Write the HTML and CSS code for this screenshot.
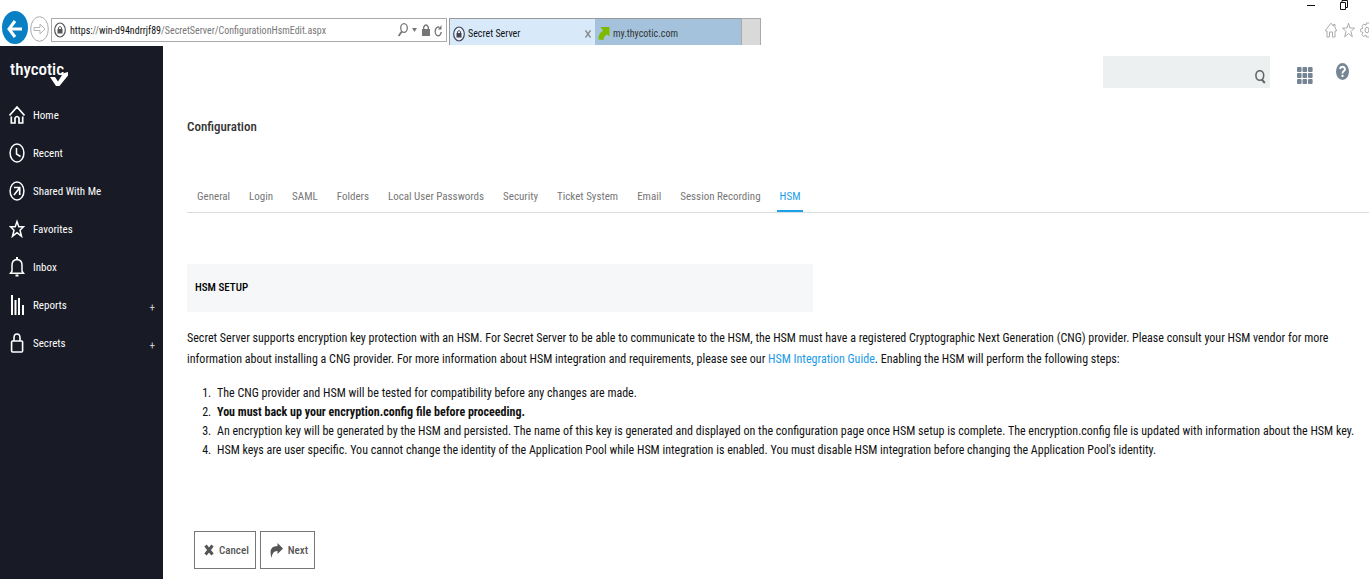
FILE: index.html
```html
<!DOCTYPE html>
<html lang="en">
<head>
<meta charset="utf-8">
<title>Secret Server</title>
<link rel="stylesheet" href="styles.css">
</head>
<body>
<header class="browser">
  <button class="nav-btn" aria-label="Back"><svg width="26" height="33" viewBox="0 0 26 33"><ellipse cx="13" cy="16.500" rx="13" ry="16.500" fill="#0a80c4"/><path d="M20 18H7M13 10L7 18l6 8" fill="none" stroke="#fff" stroke-width="3"/></svg></button>
  <button class="nav-btn fwd" aria-label="Forward"><svg width="19" height="26" viewBox="0 0 19 26"><ellipse cx="9.500" cy="13" rx="8.800" ry="12.300" fill="#fff" stroke="#aaa"/><path d="M4 11.500h6V8l5 5-5 5v-3.500H4z" fill="none" stroke="#b5b5b5"/></svg></button>
  <div class="address">
    <svg width="12" height="16" viewBox="0 0 12 16"><ellipse cx="6" cy="8" rx="5.300" ry="7" fill="#fff" stroke="#555" stroke-width="1.200"/><path d="M3.500 7h5v4.500h-5z" fill="#555"/><path d="M4.500 7V5.500q1.500-2 3 0V7" fill="none" stroke="#555"/></svg>
    <span class="url"><span class="host">https:</span>//<span class="host">win-d94ndrrjf89</span>/SecretServer/ConfigurationHsmEdit.aspx</span>
    <button aria-label="Search"><svg width="10" height="14" viewBox="0 0 10 14"><ellipse cx="6" cy="5" rx="3.300" ry="4.300" fill="none" stroke="#777" stroke-width="1.300"/><path d="M3.800 8.500L.6 13" stroke="#777" stroke-width="1.800"/></svg></button>
    <button aria-label="Search options"><svg width="5" height="4" viewBox="0 0 5 4"><path d="M0 0h5L2.500 4z" fill="#777"/></svg></button>
    <button class="sec" aria-label="Security report"><svg width="8" height="12" viewBox="0 0 8 12"><path d="M0 5h8v7H0z" fill="#777"/><path d="M1.700 5V3q2.300-4 4.600 0v2" fill="none" stroke="#777" stroke-width="1.400"/></svg></button>
    <button aria-label="Refresh"><svg width="8" height="13" viewBox="0 0 8 13"><path d="M5.500 3.500A3 4.300 0 1 0 7.200 8" fill="none" stroke="#777" stroke-width="1.400"/><path d="M7.500 1v4.500H4z" fill="#777"/></svg></button>
  </div>
  <nav class="tabs" aria-label="Browser tabs">
    <div class="btab active">
      <svg width="12" height="16" viewBox="0 0 12 16"><ellipse cx="6" cy="8" rx="5.300" ry="7" fill="#e8f2fa" stroke="#445" stroke-width="1.200"/><path d="M3.500 7h5v4.500h-5z" fill="#445"/><path d="M4.500 7V5.500q1.500-2 3 0V7" fill="none" stroke="#445"/></svg>
      <span class="grow">Secret Server</span>
      <button aria-label="Close tab"><svg width="6" height="8" viewBox="0 0 6 8"><path d="M.5.500l5 7M5.500.500l-5 7" stroke="#888" stroke-width="1.300"/></svg></button>
    </div>
    <div class="btab">
      <svg width="12" height="15" viewBox="0 0 12 15"><path d="M2.500 1H11.500v9.500L9 8.500Q5.500 10.500 5.500 14L.5 13.500Q0 8 5 4.500z" fill="#7fba00"/></svg>
      <span>my.thycotic.com</span>
    </div>
    <button class="new-tab" aria-label="New tab"></button>
  </nav>
  <div class="window">
    <div class="controls">
      <button aria-label="Minimize"><svg width="8" height="10" viewBox="0 0 8 10"><path d="M0 5.500h8" stroke="#111"/></svg></button>
      <button aria-label="Restore"><svg width="8" height="10" viewBox="0 0 8 10"><path d="M.5 2.500h5v7h-5zM2 2V.5h5.500v7H6" fill="none" stroke="#111"/></svg></button>
    </div>
    <div class="tools">
      <button aria-label="Home page"><svg width="12" height="16" viewBox="0 0 12 16"><path d="M.7 8L6 1.200l2.500 3V2.500H10V6l1.400 2v1H10v6H7.500v-5h-3v5H2V9H.7z" fill="none" stroke="#aaa"/></svg></button>
      <button aria-label="Favorites list"><svg width="13" height="16" viewBox="0 0 13 16"><path d="M6.500 1.200L8 6h4.500L9 9.500l1.300 5.300-3.800-3.300-3.800 3.300L4 9.500.5 6H5z" fill="none" stroke="#aaa"/></svg></button>
      <button aria-label="Tools"><svg width="9" height="16" viewBox="0 0 9 16"><path d="M9 1H6.500L6 3 3.500 2.200 2 4.500 3 6 .7 7v2.500L3 10.500l-1 2 1.500 2L6 13l.5 2H9" fill="none" stroke="#aaa"/><ellipse cx="7" cy="8" rx="2" ry="2.800" fill="none" stroke="#aaa"/></svg></button>
    </div>
  </div>
</header>

<div class="app">
  <aside class="sidebar">
    <a class="logo" href="#">thycotic<svg class="check" width="18" height="15" viewBox="0 0 18 15"><path d="M0 5h5l3 4.500 4-6.500-1.500-1L18 0v3.500L9.500 14H6z" fill="#fff"/></svg></a>
    <nav class="menu" aria-label="Main">
      <a href="#"><svg width="16" height="20" viewBox="0 0 16 20"><path d="M.5 10.500L8 2l7.500 8.500M2.300 11.500V18H6v-5q2-3 4 0v5h3.700v-6.500" fill="none" stroke="#fff" stroke-width="1.700"/></svg>Home</a>
      <a href="#"><svg width="16" height="20" viewBox="0 0 16 20"><ellipse cx="8" cy="10" rx="6.900" ry="9" fill="none" stroke="#fff" stroke-width="1.500"/><path d="M7.500 5v6l4 2.500" fill="none" stroke="#fff" stroke-width="1.500"/></svg>Recent</a>
      <a href="#"><svg width="16" height="20" viewBox="0 0 16 20"><ellipse cx="8" cy="10" rx="6.900" ry="9" fill="none" stroke="#fff" stroke-width="1.500"/><path d="M5 14l5.500-7M5 6.500h5.700V14" fill="none" stroke="#fff" stroke-width="1.700"/></svg>Shared With Me</a>
      <a href="#"><svg width="16" height="20" viewBox="0 0 16 20"><path d="M8 2.500l1.800 5.300h4.700L11 11.300l1.500 5.900L8 13.700l-4.500 3.500L5 11.300 1.500 7.800h4.700z" fill="none" stroke="#fff" stroke-width="1.500"/></svg>Favorites</a>
      <a href="#"><svg width="16" height="20" viewBox="0 0 16 20"><path d="M1.500 16.200h13l-1.500-2V8q0-5-5-5.500Q3 3 3 8v6.200z" fill="none" stroke="#fff" stroke-width="1.500"/><path d="M8 0v2.500M6.500 18.500h3" stroke="#fff" stroke-width="2"/></svg>Inbox</a>
      <a href="#"><svg width="16" height="20" viewBox="0 0 16 20"><path d="M3 0v20M6.500 5v15M10 3v17M14 10v10" stroke="#fff" stroke-width="2"/></svg>Reports<span class="plus">+</span></a>
      <a href="#"><svg width="16" height="20" viewBox="0 0 16 20"><rect x="2.600" y="8" width="11" height="11" rx="1" fill="none" stroke="#fff" stroke-width="1.600"/><path d="M5 8V5q0-4 3-4t3 4v3" fill="none" stroke="#fff" stroke-width="1.600"/></svg>Secrets<span class="plus">+</span></a>
    </nav>
  </aside>

  <main class="main">
    <div class="topbar">
      <label class="search"><input type="text" aria-label="Search secrets"><svg width="11" height="14" viewBox="0 0 11 14"><ellipse cx="4.800" cy="5.500" rx="3.900" ry="4.800" fill="none" stroke="#666" stroke-width="1.600"/><path d="M6.800 9.500L9.800 13" stroke="#666" stroke-width="2"/></svg></label>
      <button class="apps" aria-label="Applications"><svg width="16" height="17" viewBox="0 0 16 17" fill="#758594"><rect width="4.600" height="5" rx="1"/><rect x="5.500" width="4.600" height="5" rx="1"/><rect x="11" width="4.600" height="5" rx="1"/><rect y="6" width="4.600" height="5" rx="1"/><rect x="5.500" y="6" width="4.600" height="5" rx="1"/><rect x="11" y="6" width="4.600" height="5" rx="1"/><rect y="12" width="4.600" height="5" rx="1"/><rect x="5.500" y="12" width="4.600" height="5" rx="1"/><rect x="11" y="12" width="4.600" height="5" rx="1"/></svg></button>
      <button class="help" aria-label="Help"><svg width="13" height="17" viewBox="0 0 13 17"><ellipse cx="6.500" cy="8.500" rx="6.500" ry="8.500" fill="#758594"/><path d="M4 6Q4.500 3.800 6.500 3.800T9 6.300Q9 7.500 7.500 8.300 6.500 9 6.500 10.500M6.500 11.800V14" fill="none" stroke="#fff" stroke-width="1.900"/></svg></button>
    </div>
    <h1>Configuration</h1>
    <nav class="config-tabs" aria-label="Configuration">
      <a href="#">General</a><a href="#">Login</a><a href="#">SAML</a><a href="#">Folders</a><a href="#">Local User Passwords</a><a href="#">Security</a><a href="#">Ticket System</a><a href="#">Email</a><a href="#">Session Recording</a><a href="#" class="current" aria-current="page">HSM</a>
    </nav>
    <h2>HSM SETUP</h2>
    <p class="intro">Secret Server supports encryption key protection with an HSM. For Secret Server to be able to communicate to the HSM, the HSM must have a registered Cryptographic Next Generation (CNG) provider. Please consult your HSM vendor for more information about installing a CNG provider. For more information about HSM integration and requirements, please see our <a href="#">HSM Integration Guide</a>. Enabling the HSM will perform the following steps:</p>
    <ol>
      <li>The CNG provider and HSM will be tested for compatibility before any changes are made.</li>
      <li><strong>You must back up your encryption.config file before proceeding.</strong></li>
      <li>An encryption key will be generated by the HSM and persisted. The name of this key is generated and displayed on the configuration page once HSM setup is complete. The encryption.config file is updated with information about the HSM key.</li>
      <li>HSM keys are user specific. You cannot change the identity of the Application Pool while HSM integration is enabled. You must disable HSM integration before changing the Application Pool's identity.</li>
    </ol>
    <div class="actions">
      <button><svg width="10" height="12" viewBox="0 0 10 12"><path d="M1.500 1.500l7 9M8.500 1.500l-7 9" stroke="#555" stroke-width="3"/></svg>Cancel</button>
      <button><svg width="13" height="15" viewBox="0 0 13 15"><path d="M7.500 0L13 5.500 7.500 11V8Q2.500 7.500 1.500 15-2 3 7.500 3z" fill="#555"/></svg>Next</button>
    </div>
  </main>
</div>
</body>
</html>
```

FILE: styles.css
```css
* { box-sizing: border-box; }

body {
  margin: 0;
  min-height: 100vh;
  display: flex;
  flex-direction: column;
  overflow-x: hidden;
  background: #fff;
  color: #111;
  font-family: "Roboto Condensed", Roboto, "Liberation Sans", sans-serif;
  font-size: 12px;
}

button {
  padding: 0;
  border: 0;
  background: none;
  font: inherit;
  color: inherit;
  display: flex;
  align-items: center;
}

svg { display: block; flex: none; }
a { text-decoration: none; }

/* Browser frame */
.browser {
  display: flex;
  align-items: flex-start;
  height: 46px;
  padding-left: 2px;
  font-size: 10px;
}
.nav-btn { margin-top: 11px; }
.fwd { margin: 16px 2px 0 2px; }
.address {
  flex: 0 1 396px;
  height: 24px;
  margin-top: 18px;
  padding: 0 4px 0 2px;
  border: 1px solid #aaa;
  display: flex;
  align-items: center;
  gap: 4px;
}
.url { flex: 1; color: #777; white-space: nowrap; }
.host { color: #111; }
.sec { margin-left: 1px; }

.tabs { display: flex; height: 27px; margin: 18px 0 0 2px; }
.btab {
  width: 146px;
  padding: 3px 4px 0 3px;
  display: flex;
  align-items: center;
  gap: 3px;
  border-top: 1px solid #999;
  background: #a4c2db;
  color: #333;
}
.btab.active { border-left: 1px solid #999; background: #d8eafa; color: #111; }
.grow { flex: 1; }
.new-tab { width: 20px; background: #d9d9d9; border: 1px solid #aaa; border-bottom: 0; }

.window { margin-left: auto; }
.controls { display: flex; gap: 25px; justify-content: flex-end; padding-right: 21px; height: 22px; align-items: flex-start; }
.tools { display: flex; gap: 5px; justify-content: flex-end; }

/* Application */
.app { flex: 1; display: flex; }
.sidebar { flex: 0 0 163px; background: #181a25; color: #fff; }
.logo {
  position: relative;
  display: block;
  width: 60px;
  margin: 14px 0 0 10px;
  height: 36px;
  font-size: 17px;
  line-height: 18px;
  font-weight: 500;
  color: #fff;
}
.check { position: absolute; left: 40px; top: 12px; }
.menu a {
  display: flex;
  align-items: center;
  gap: 8px;
  height: 38px;
  padding: 0 8px 0 9px;
  color: #fff;
  font-size: 11px;
}
.plus { margin-left: auto; padding-top: 4px; color: #ccc; }

.main { flex: 1; min-width: 0; padding: 10px 0 10px 24px; }
.topbar { display: flex; justify-content: flex-end; align-items: flex-start; padding-right: 20px; }
.search { display: flex; align-items: center; width: 167px; height: 32px; padding: 10px 4px 0 8px; background: #ecf0f1; }
.search input { flex: 1; min-width: 0; height: 18px; padding: 0; border: 0; outline: 0; background: none; }
.apps { margin: 11px 0 0 27px; }
.help { margin: 7px 0 0 23px; }

h1 { margin: 29px 0 0; font-size: 13px; line-height: 20px; font-weight: 500; color: #333; }

.config-tabs { display: flex; gap: 13px; margin-top: 49px; padding-left: 7px; border-bottom: 1px solid #ddd; }
.config-tabs a {
  padding: 0 3px 4px;
  height: 26px;
  line-height: 22px;
  font-size: 11px;
  color: #777;
  white-space: nowrap;
}
.config-tabs .current { color: #1ba1e8; border-bottom: 2px solid #1ba1e8; }

h2 { max-width: 626px; margin: 51px 0 16px; padding: 0 8px; background: #f6f7f9; font-size: 11px; line-height: 48px; font-weight: 500; color: #000; }

.intro { margin: 0 30px 0 0; line-height: 21px; }
.intro a { color: #1b9ae8; }
ol { margin: 14px 0 0; padding-left: 27px; line-height: 19px; }
li { padding-left: 3px; }
strong { font-weight: 700; }

.actions { display: flex; gap: 4px; margin: 71px 0 0 7px; }
.actions button {
  height: 38px;
  padding: 0 6px 0 9px;
  gap: 5px;
  border: 1px solid #777;
  background: #fff;
  color: #555;
  font-size: 11px;
  font-weight: 500;
}
```
